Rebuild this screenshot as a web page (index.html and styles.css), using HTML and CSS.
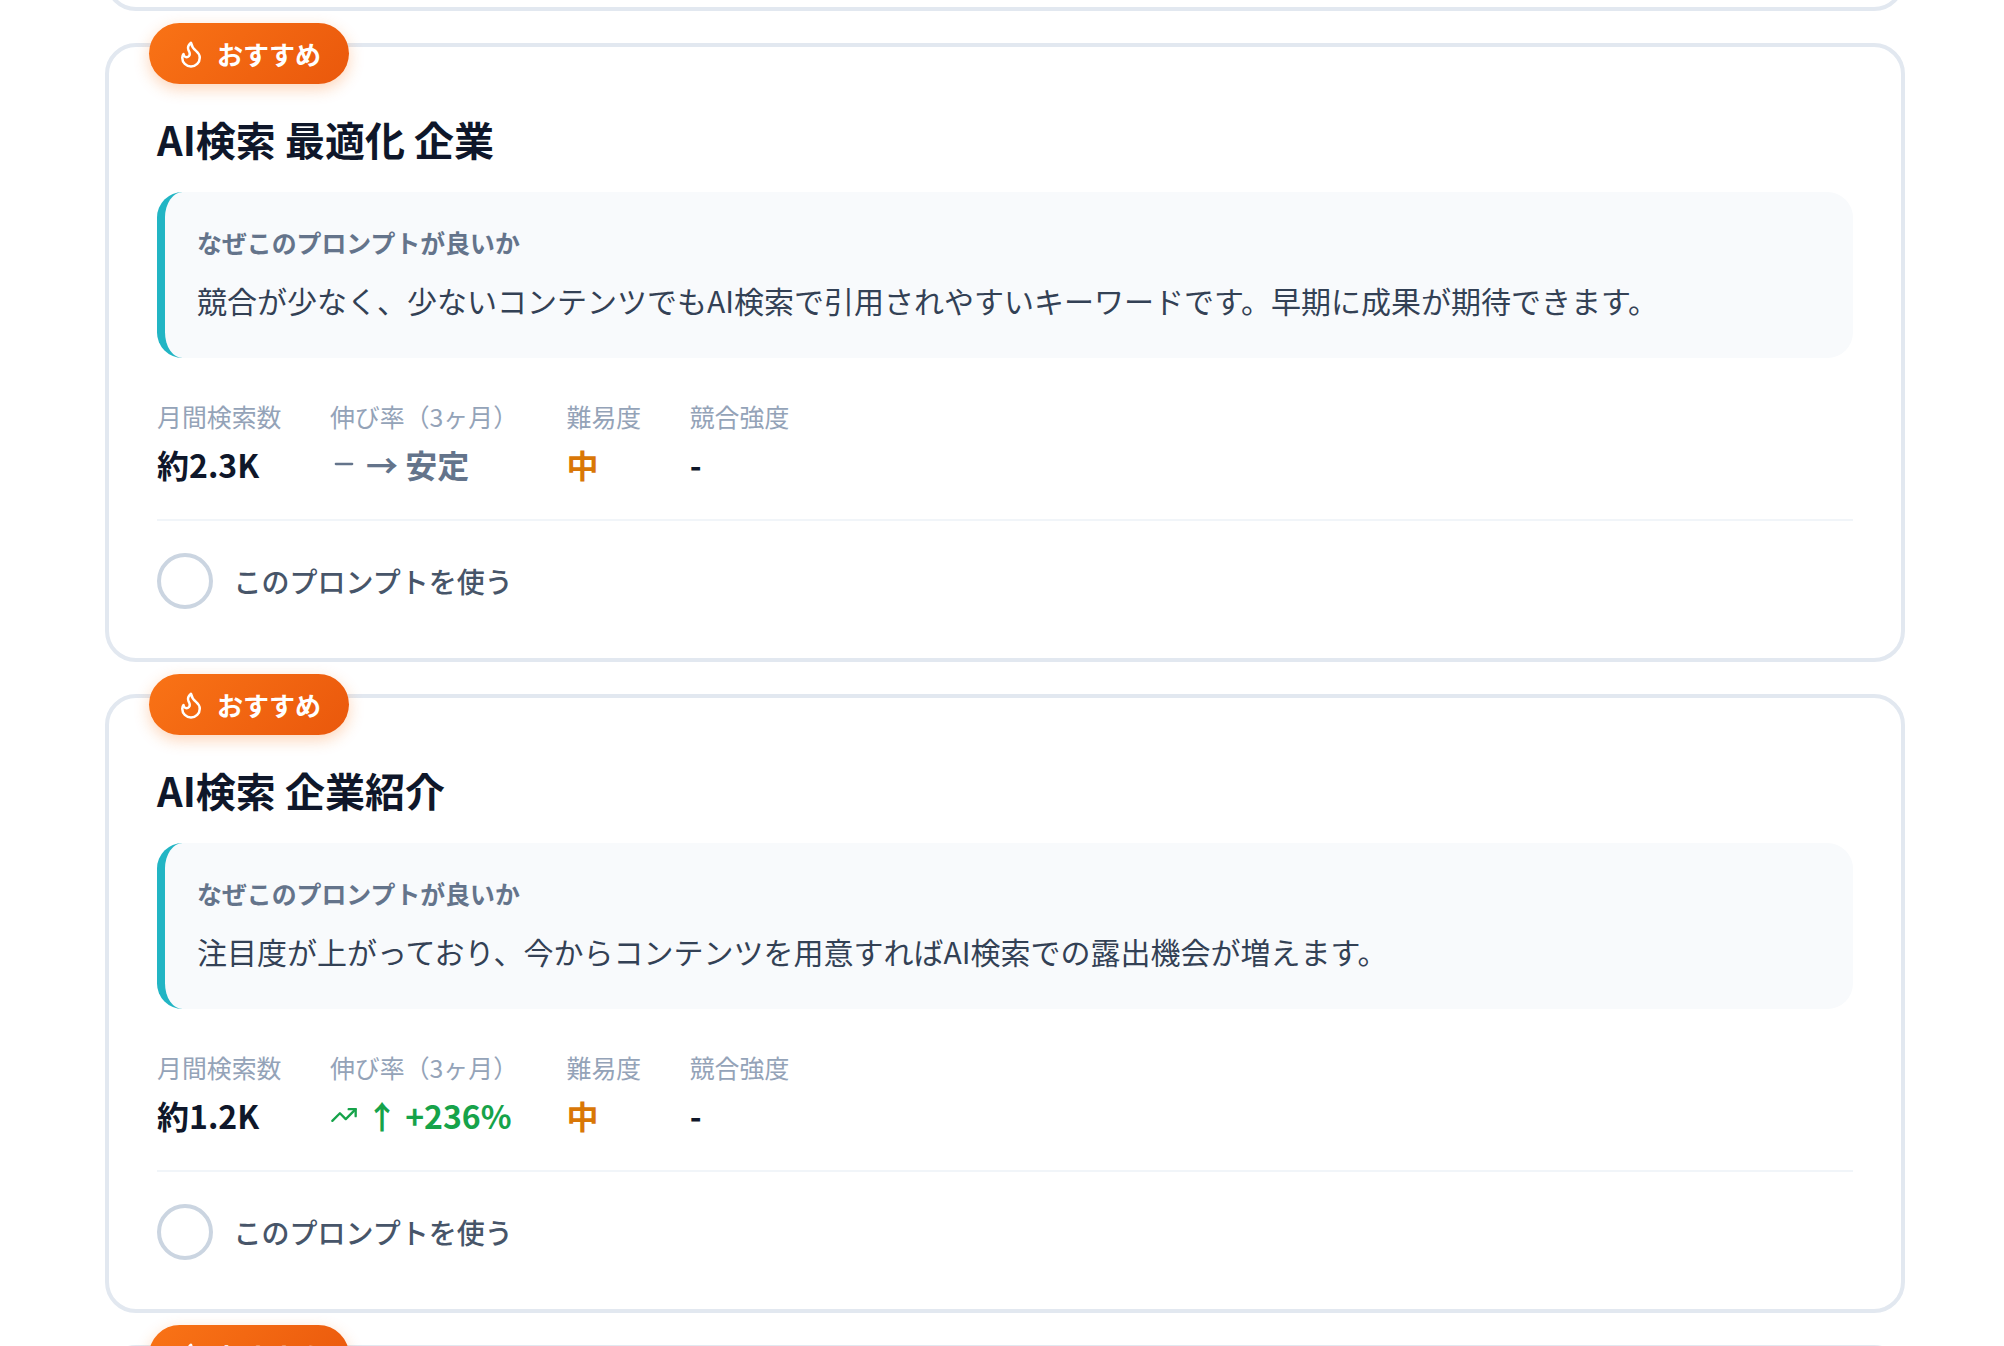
FILE: index.html
```html
<!DOCTYPE html>
<html lang="ja">
<head>
<meta charset="utf-8">
<title>おすすめプロンプト</title>
<link rel="stylesheet" href="styles.css">
</head>
<body>
<main class="list">
  <section class="card card-prev"></section>

  <section class="card">
    <div class="badge">
      <svg class="flame" viewBox="0 0 24 24"><path d="M8.5 14.5A2.5 2.5 0 0 0 11 12c0-1.38-.5-2-1-3-1.072-2.143-.224-4.054 2-6 .5 2.5 2 4.9 4 6.5 2 1.6 3 3.5 3 5.5a7 7 0 1 1-14 0c0-1.153.433-2.294 1-3a2.5 2.5 0 0 0 2.5 2.5z"/></svg>
      <span>おすすめ</span>
    </div>
    <h2 class="title">AI検索 最適化 企業</h2>
    <div class="why">
      <div class="why-label">なぜこのプロンプトが良いか</div>
      <p class="why-text">競合が少なく、少ないコンテンツでもAI検索で引用されやすいキーワードです。早期に成果が期待できます。</p>
    </div>
    <div class="metrics">
      <div class="metric"><div class="metric-label">月間検索数</div><div class="metric-value">約2.3K</div></div>
      <div class="metric"><div class="metric-label">伸び率（3ヶ月）</div><div class="metric-value trend flat">
        <svg class="trend-icon" viewBox="0 0 24 24"><path d="M5 12h14"/></svg><span>→ 安定</span></div></div>
      <div class="metric"><div class="metric-label">難易度</div><div class="metric-value medium">中</div></div>
      <div class="metric"><div class="metric-label">競合強度</div><div class="metric-value">-</div></div>
    </div>
    <label class="use"><span class="radio"></span><span class="use-text">このプロンプトを使う</span></label>
  </section>

  <section class="card">
    <div class="badge">
      <svg class="flame" viewBox="0 0 24 24"><path d="M8.5 14.5A2.5 2.5 0 0 0 11 12c0-1.38-.5-2-1-3-1.072-2.143-.224-4.054 2-6 .5 2.5 2 4.9 4 6.5 2 1.6 3 3.5 3 5.5a7 7 0 1 1-14 0c0-1.153.433-2.294 1-3a2.5 2.5 0 0 0 2.5 2.5z"/></svg>
      <span>おすすめ</span>
    </div>
    <h2 class="title">AI検索 企業紹介</h2>
    <div class="why">
      <div class="why-label">なぜこのプロンプトが良いか</div>
      <p class="why-text">注目度が上がっており、今からコンテンツを用意すればAI検索での露出機会が増えます。</p>
    </div>
    <div class="metrics">
      <div class="metric"><div class="metric-label">月間検索数</div><div class="metric-value">約1.2K</div></div>
      <div class="metric"><div class="metric-label">伸び率（3ヶ月）</div><div class="metric-value trend up">
        <svg class="trend-icon" viewBox="0 0 24 24"><path d="M22 7l-8.5 8.5-5-5L2 17"/><path d="M16 7h6v6"/></svg><span>↑ +236%</span></div></div>
      <div class="metric"><div class="metric-label">難易度</div><div class="metric-value medium">中</div></div>
      <div class="metric"><div class="metric-label">競合強度</div><div class="metric-value">-</div></div>
    </div>
    <label class="use"><span class="radio"></span><span class="use-text">このプロンプトを使う</span></label>
  </section>

  <section class="card">
    <div class="badge">
      <svg class="flame" viewBox="0 0 24 24"><path d="M8.5 14.5A2.5 2.5 0 0 0 11 12c0-1.38-.5-2-1-3-1.072-2.143-.224-4.054 2-6 .5 2.5 2 4.9 4 6.5 2 1.6 3 3.5 3 5.5a7 7 0 1 1-14 0c0-1.153.433-2.294 1-3a2.5 2.5 0 0 0 2.5 2.5z"/></svg>
      <span>おすすめ</span>
    </div>
  </section>
</main>
</body>
</html>
```
FILE: styles.css
```css
* { box-sizing: border-box; }
html, body { margin: 0; height: 100%; overflow: hidden; background: #fff; }
body { font-family: "Noto Sans CJK JP", "Noto Sans", sans-serif; color: #0f172a; }

.list {
  display: flex;
  flex-direction: column;
  gap: 32px;
  width: 1800px;
  margin: -608px 0 0 105px;
}

.card {
  position: relative;
  flex: none;
  height: 619px;
  padding: 0 48px;
  background: #fff;
  border: 4px solid #e2e8f0;
  border-radius: 31px;
}

.badge {
  position: absolute;
  top: -24px;
  left: 40px;
  display: flex;
  align-items: center;
  gap: 11px;
  width: 200px;
  height: 61px;
  padding-left: 27px;
  border-radius: 30.5px;
  background: linear-gradient(135deg, #f97316, #ea580c);
  box-shadow: 0 5px 15px rgba(249, 115, 22, 0.3);
  color: #fff;
  font-size: 26px;
  font-weight: 700;
}

.flame {
  width: 30px;
  height: 30px;
  fill: none;
  stroke: #fff;
  stroke-width: 2;
  stroke-linecap: round;
  stroke-linejoin: round;
}

.title {
  margin: 0;
  padding-top: 63px;
  font-size: 40px;
  font-weight: 700;
  line-height: 58px;
  color: #0f172a;
}

.why {
  height: 166px;
  margin-top: 23.5px;
  padding: 32.5px 32px 0;
  background: #f8fafc;
  border-left: 8px solid #22b5c4;
  border-radius: 25.6px;
}

.why-label {
  font-size: 24.9px;
  font-weight: 700;
  line-height: 36px;
  color: #64748b;
}

.why-text {
  margin: 16px 0 0;
  font-size: 30px;
  line-height: 48px;
  color: #334155;
}

.metrics {
  display: flex;
  gap: 48.5px;
  height: 163.5px;
  padding-top: 40px;
  border-bottom: 2px solid #f1f5f9;
}

.metric-label {
  font-size: 24.9px;
  line-height: 36px;
  color: #94a3b8;
  white-space: nowrap;
}

.metric-value {
  margin-top: 7.5px;
  font-size: 32px;
  font-weight: 700;
  line-height: 46px;
  white-space: nowrap;
}

.trend { display: flex; align-items: center; gap: 8px; }
.flat { color: #64748b; }
.up { color: #16a34a; }
.medium { color: #d97706; }

.trend-icon {
  width: 28px;
  height: 28px;
  fill: none;
  stroke: currentColor;
  stroke-width: 2;
  stroke-linecap: round;
  stroke-linejoin: round;
}

.use {
  display: flex;
  align-items: center;
  gap: 20.5px;
  margin-top: 32px;
}

.radio {
  width: 56px;
  height: 56px;
  border: 4px solid #cbd5e1;
  border-radius: 50%;
}

.use-text {
  font-size: 28px;
  font-weight: 500;
  color: #475569;
}
```
